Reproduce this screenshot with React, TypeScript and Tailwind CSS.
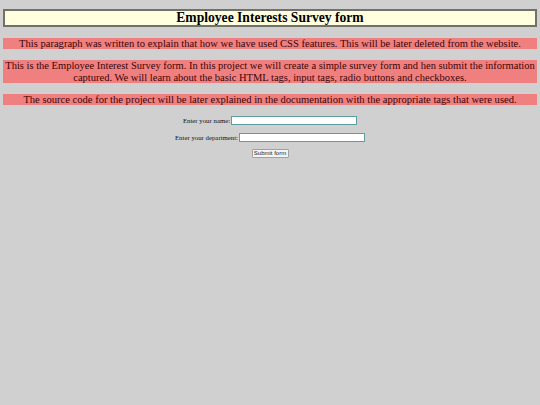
export default function App() {
  return (
    <div className="min-h-[405px] bg-[#d0d0d0] px-[3px] pt-[9px] font-['Liberation_Serif',serif] text-black">
      <h1 className="h-[18px] border-2 border-[#6f716a] bg-[#ffffe0] text-center text-[13.6px] font-bold leading-[14px]">
        Employee Interests Survey form
      </h1>
      <p className="mt-[11px] bg-[#f08080] text-center text-[10.55px] leading-[11px] text-[#3a0505]">
        This paragraph was written to explain that how we have used CSS features. This will be later deleted from the website.
      </p>
      <p className="mt-[11px] bg-[#f08080] text-center text-[10.5px] leading-[11.5px] text-[#3a0505]">
        This is the Employee Interest Survey form. In this project we will create a simple survey form and hen submit the information captured. We will learn about the basic HTML tags, input tags, radio buttons and checkboxes.
      </p>
      <p className="mt-[11px] bg-[#f08080] text-center text-[10.55px] leading-[11px] text-[#3a0505]">
        The source code for the project will be later explained in the documentation with the appropriate tags that were used.
      </p>
      <form className="mt-[11px] flex flex-col items-center text-[6.8px] leading-[9px] text-[#111]">
        <label className="flex items-center gap-[1px]">
          Enter your name:
          <input type="text" className="h-[9px] w-[126px] border border-[#5f9ea0] bg-white" />
        </label>
        <label className="mt-[8px] flex items-center gap-[1px]">
          Enter your department:
          <input type="text" className="h-[9px] w-[126px] border border-[#5f9ea0] bg-white" />
        </label>
        <button
          type="button"
          className="mt-[7px] flex h-[9px] w-[37px] items-center justify-center rounded-[1px] border border-[#a0a0a0] bg-[#f4f4f4] font-['Liberation_Sans',sans-serif] text-[6px] text-[#222]"
        >
          Submit form
        </button>
      </form>
    </div>
  );
}
